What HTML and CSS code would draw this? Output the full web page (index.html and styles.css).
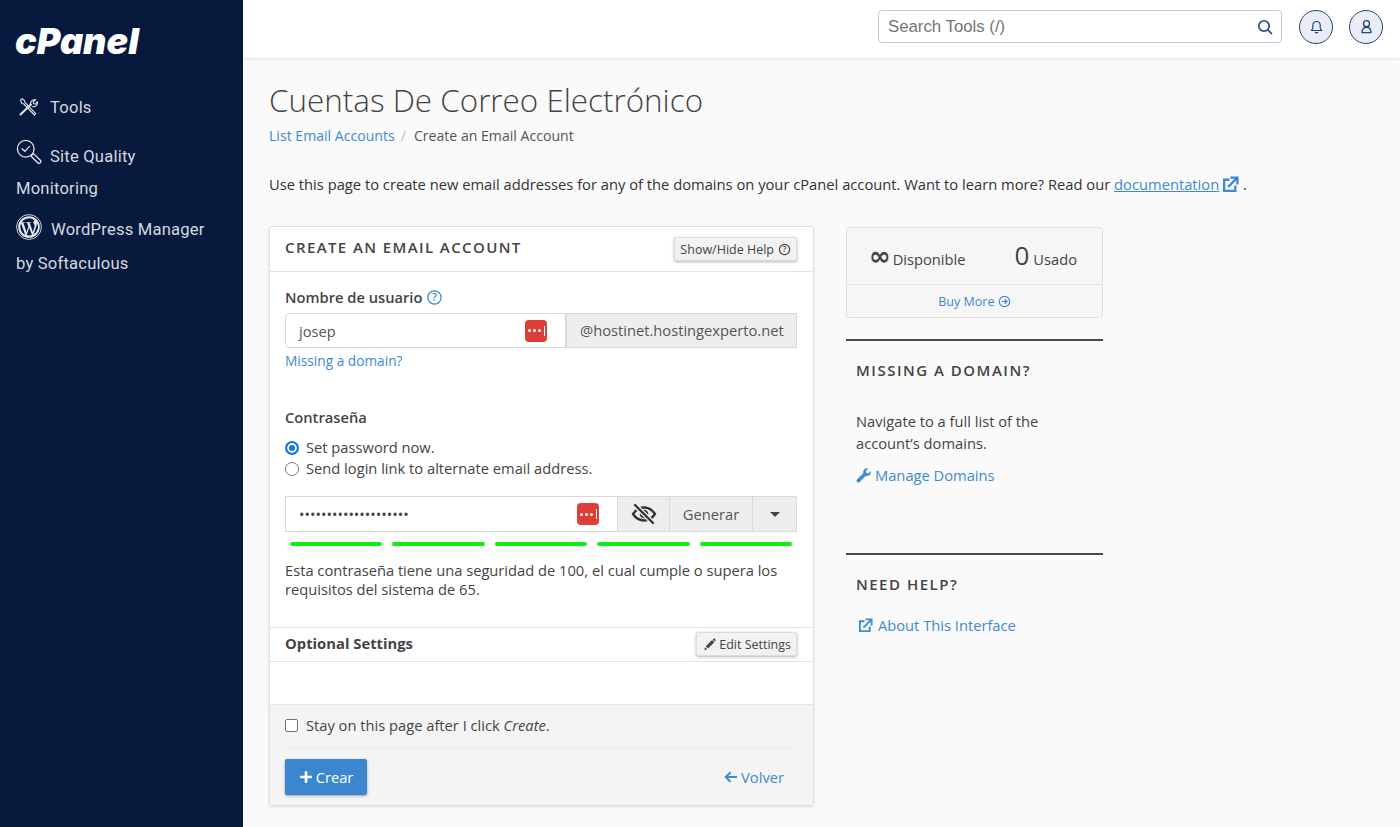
FILE: index.html
```html
<!DOCTYPE html>
<html lang="es">
<head>
<meta charset="utf-8">
<title>Cuentas De Correo Electrónico</title>
<link rel="stylesheet" href="styles.css">
</head>
<body>
<div class="app">
  <aside class="sidebar">
    <div class="logo">cPanel</div>
    <nav class="nav">
      <a class="nav-item nav-tools">
        <svg class="ic-tools" viewBox="0 0 24 24" fill="none" stroke="#e3e6ec" stroke-linecap="round" stroke-linejoin="round"><path d="M3 3.500 5 2l3 2.500.3 2 13 13.500-1.600 1.600-13-13.500-2.200-.4z" stroke-width="1.300"/><path d="M15.500 9 3 21" stroke-width="2.400"/><path d="M15 9.500c-1-3.300 2-7 6.200-6.500l-3 3 .4 2 2 .5 3-3c.4 4-3 7-6.300 6" stroke-width="1.300"/></svg>
        <span>Tools</span>
      </a>
      <a class="nav-item nav-sq">
        <svg class="ic-sq" viewBox="0 0 28 28" fill="none" stroke="#e3e6ec" stroke-width="1.400" stroke-linecap="round" stroke-linejoin="round"><circle cx="10.500" cy="10.500" r="9"/><path d="M6.500 10.500l3 2.800 5-5.300"/><path d="M17.200 17l2-1 7 6.800c.8 1 .7 2-.1 2.800-.9.8-1.900.7-2.700-.1l-6.900-6.700z"/></svg>
        <span>Site Quality<br>Monitoring</span>
      </a>
      <a class="nav-item nav-wp">
        <svg class="ic-wp" viewBox="0 0 26 26"><circle cx="13" cy="13" r="12.400" fill="none" stroke="#e3e6ec" stroke-width=".9"/><circle cx="13" cy="13" r="10.800" fill="#e3e6ec"/><path d="M4.300 13c0 3.500 2 6.500 5 7.900L5.100 9.500A8.700 8.700 0 0 0 4.300 13zm14.500-.4c0-1.100-.4-1.800-.7-2.400-.4-.7-.8-1.300-.8-2 0-.8.600-1.500 1.400-1.500h.1a8.700 8.700 0 0 0-13.200 1.600h.6c.9 0 2.300-.1 2.300-.1.500 0 .5.700 0 .7l-1 .1 3 9.100 1.900-5.600-1.300-3.500-.9-.1c-.5 0-.4-.8 0-.7 0 0 1.400.1 2.300.1s2.300-.1 2.300-.1c.5 0 .5.700 0 .7l-1 .1 3 9 .9-2.800c.4-1.100.6-1.900.6-2.600zm-5.600 1.200-2.500 7.200a8.700 8.700 0 0 0 5.300-.1l-.1-.1zm7.600-5c0 .3.100.6.100.9 0 .9-.2 1.900-.7 3.100l-2.700 7.700a8.700 8.700 0 0 0 3.300-11.700z" fill="#071a3e"/></svg>
        <span>WordPress Manager<br>by Softaculous</span>
      </a>
    </nav>
  </aside>
  <div class="page">
    <header class="topbar">
      <div class="search">
        <span class="search-text">Search Tools (/)</span>
        <svg class="search-ic" viewBox="0 0 16 16" fill="none" stroke="#20427a" stroke-width="1.600" stroke-linecap="round"><circle cx="7" cy="7" r="5.200"/><path d="M11 11l3.500 3.500"/></svg>
      </div>
      <div class="round-btn"><svg viewBox="0 0 16 16" fill="none" stroke="#20427a" stroke-width="1.200" stroke-linecap="round" stroke-linejoin="round"><path d="M2.500 12.300h11c-1-.9-1.600-1.700-1.600-3.500V6.500a3.900 3.900 0 0 0-7.800 0v2.300c0 1.800-.6 2.600-1.600 3.500z"/><path d="M6.700 14.500h2.600"/></svg></div>
      <div class="round-btn"><svg viewBox="0 0 16 16" fill="none" stroke="#20427a" stroke-width="1.400" stroke-linecap="round" stroke-linejoin="round"><circle cx="8" cy="5" r="3.200"/><path d="M3.200 14.500c0-3.500 1.800-5.500 4.800-5.500s4.800 2 4.800 5.500z"/></svg></div>
    </header>
    <main class="content">
      <h1 class="title">Cuentas De Correo Electrónico</h1>
      <div class="crumbs"><a class="link">List Email Accounts</a><span class="sep">/</span><span>Create an Email Account</span></div>
      <p class="intro">Use this page to create new email addresses for any of the domains on your cPanel account. Want to learn more? Read our <a class="link under">documentation</a><svg class="ic-ext" viewBox="0 0 16 16" fill="none" stroke="#3d8bd0" stroke-width="2.200"><path d="M7 3.500H2v10.500h10.500V9"/><path d="M6.500 9.500 14 2M9 1.500h5.500V7" stroke-linecap="square"/></svg> .</p>
      <div class="cols">
        <section class="card">
          <div class="card-head">
            <h2 class="card-title">CREATE AN EMAIL ACCOUNT</h2>
            <button class="mini-btn">Show/Hide Help <svg class="ic-q" viewBox="0 0 14 14"><circle cx="7" cy="7" r="5.500" fill="none" stroke="#444" stroke-width="1.300"/><text x="7" y="10" text-anchor="middle" class="q-t">?</text></svg></button>
          </div>
          <div class="card-body">
            <label class="lbl">Nombre de usuario <svg class="ic-help" viewBox="0 0 14 14"><circle cx="7" cy="7" r="6.200" fill="none" stroke="#3d8bd0" stroke-width="1.200"/><text x="7" y="10.300" text-anchor="middle" class="q-b">?</text></svg></label>
            <div class="input-group">
              <div class="field field-user"><span>josep</span><span class="lp"><i></i><i></i><i></i><b></b></span></div>
              <div class="addon">@hostinet.hostingexperto.net</div>
            </div>
            <a class="link missing">Missing a domain?</a>
            <div class="lbl lbl-pass">Contraseña</div>
            <div class="radio-row"><span class="radio on"></span>Set password now.</div>
            <div class="radio-row"><span class="radio"></span>Send login link to alternate email address.</div>
            <div class="input-group pass-group">
              <div class="field field-pass"><span class="dots">••••••••••••••••••••</span><span class="lp"><i></i><i></i><i></i><b></b></span></div>
              <div class="gbtn gbtn-eye"><svg viewBox="0 0 26 22"><path d="M2 11c3-4.500 7-6.500 11-6.500S21 6.500 24 11c-3 4.500-7 6.500-11 6.500S5 15.500 2 11z" fill="none" stroke="#333" stroke-width="2.300"/><circle cx="13" cy="11" r="4.300" fill="#333"/><path d="M4 2l18 18" stroke="#eee" stroke-width="5"/><path d="M4 2l18 18" stroke="#333" stroke-width="2.300" stroke-linecap="round"/></svg></div>
              <div class="gbtn gbtn-gen">Generar</div>
              <div class="gbtn gbtn-caret"><span class="caret"></span></div>
            </div>
            <div class="meter"><i></i><i></i><i></i><i></i><i></i></div>
            <p class="strength">Esta contraseña tiene una seguridad de 100, el cual cumple o supera los requisitos del sistema de 65.</p>
          </div>
          <div class="opt-head">
            <h3 class="opt-title">Optional Settings</h3>
            <button class="mini-btn mini-edit"><svg class="ic-pen" viewBox="0 0 14 14" fill="#444"><path d="M3 9 9.800 2.200l2.400 2.400L5.400 11.400zM2.300 10l2.100 2.100-3.100 1zM10.500 1.500l.8-.8c.4-.3.900-.3 1.200 0l1 1c.3.300.3.800 0 1.200l-.8.800z"/></svg>Edit Settings</button>
          </div>
          <div class="opt-space"></div>
          <div class="card-foot">
            <div class="stay"><span class="check"></span>Stay on this page after I click&nbsp;<em>Create</em>.</div>
            <div class="actions">
              <button class="primary"><svg viewBox="0 0 12 12" class="ic-plus"><path d="M6 1v10M1 6h10" stroke="#fff" stroke-width="2.200"/></svg>Crear</button>
              <a class="link back"><svg viewBox="0 0 14 12" class="ic-back" fill="none" stroke="#3d8bd0" stroke-width="2"><path d="M13 6H2M6.500 1.200 1.700 6l4.800 4.800"/></svg>Volver</a>
            </div>
          </div>
        </section>
        <aside class="side">
          <div class="stats">
            <div class="stats-top">
              <div class="stat"><span class="inf">∞</span><span>Disponible</span></div>
              <div class="stat"><span class="zero">0</span><span>Usado</span></div>
            </div>
            <div class="stats-foot"><a class="link">Buy More <svg class="ic-more" viewBox="0 0 14 14" fill="none" stroke="#3d8bd0" stroke-width="1.300"><circle cx="7" cy="7" r="5.600"/><path d="M3.800 7h5.500M7.200 4.600 9.600 7l-2.400 2.400"/></svg></a></div>
          </div>
          <div class="panel panel-domain">
            <h2 class="panel-title">MISSING A DOMAIN?</h2>
            <p class="panel-text">Navigate to a full list of the account’s domains.</p>
            <a class="link panel-link"><svg class="ic-wrench" viewBox="0 0 16 16" fill="#3d8bd0"><path d="M15.700 3.600c.2.800.1 1.700-.3 2.500a4.300 4.300 0 0 1-5 2.100L4 14.800a1.900 1.900 0 0 1-2.800 0 2 2 0 0 1 0-2.800l6.600-6.400a4.300 4.300 0 0 1 4.700-5.300l.6.200-2.700 2.600.5 2.200 2.200.5 2.600-2.600z"/></svg>Manage Domains</a>
          </div>
          <div class="panel panel-help">
            <h2 class="panel-title">NEED HELP?</h2>
            <a class="link panel-link about"><svg class="ic-ext2" viewBox="0 0 16 16" fill="none" stroke="#3d8bd0" stroke-width="2"><path d="M7 3.500H2v10.500h10.500V9"/><path d="M6.500 9.500 14 2M9 1.500h5.500V7" stroke-linecap="square"/></svg>About This Interface</a>
          </div>
        </aside>
      </div>
    </main>
  </div>
</div>
</body>
</html>
```
FILE: styles.css
```css
* { box-sizing: border-box; }
html, body { margin: 0; height: 100%; }
body { font-family: "Open Sans", sans-serif; font-size: 14.7px; color: #444; background: #fafafa; overflow: hidden; }
.app { display: flex; height: 827px; }
a { text-decoration: none; }
h1, h2, h3, p { margin: 0; }
svg { display: inline-block; }

.sidebar { width: 243px; flex: none; background: #071a3e; color: #d5d8de; font-family: Roboto, sans-serif; font-size: 16.6px; padding: 0 16px; }
.logo { font-family: Inter, sans-serif; font-weight: 900; font-style: italic; font-size: 36px; color: #fff; line-height: 40px; padding-top: 21px; height: 61px; margin-left: -1px; }
.nav { display: flex; flex-direction: column; margin-top: 30px; }
.nav-item { display: block; color: #d5d8de; letter-spacing: .2px; }
.nav-tools { display: flex; align-items: center; height: 32px; }
.ic-tools { width: 20px; height: 20px; margin: 0 12px 0 2px; }
.nav-sq { margin-top: 18px; line-height: 32px; }
.ic-sq { width: 26px; height: 26px; margin-right: 8px; float: left; margin-top: -2px; }
.nav-wp { margin-top: 8px; line-height: 34px; }
.ic-wp { width: 26px; height: 26px; float: left; margin-right: 9px; margin-top: 1px; }

.page { flex: 1; min-width: 0; display: flex; flex-direction: column; }
.topbar { height: 58px; background: #fff; box-shadow: 0 1px 3px rgba(0,0,0,.1); display: flex; align-items: center; justify-content: flex-end; padding: 0 17px 5px 0; gap: 16px; flex: none; }
.search { width: 404px; height: 33px; border: 1px solid #bfc9df; border-radius: 4px; display: flex; align-items: center; justify-content: space-between; padding: 0 8px 0 9px; margin-right: 1px; font-family: "Liberation Sans", sans-serif; font-size: 16.8px; color: #757575; background: #fff; }
.search-ic { width: 16px; height: 16px; }
.round-btn { width: 34px; height: 34px; border-radius: 50%; border: 1px solid #2c4670; background: #e9edf8; display: flex; align-items: center; justify-content: center; }
.round-btn svg { width: 15px; height: 15px; }

.content { padding: 0 0 0 26px; flex: 1; }
.title { font-weight: 300; font-size: 31.4px; line-height: 44px; margin-top: 20px; color: #444; }
.crumbs { font-size: 14.1px; line-height: 20px; margin-top: 4px; color: #555; }
.sep { margin: 0 8px 0 6px; color: #bbb; }
.link { color: #3d8bd0; }
.under { text-decoration: underline; }
.intro { font-size: 14.73px; line-height: 20px; margin-top: 28px; color: #333; white-space: nowrap; }
.ic-ext { width: 17px; height: 17px; vertical-align: -3px; margin-left: 3px; }

.cols { display: flex; gap: 32px; margin-top: 32px; align-items: flex-start; }
.card { width: 545px; height: 580px; background: #fff; border: 1px solid #e0e0e0; border-radius: 3px; box-shadow: 0 1px 3px rgba(0,0,0,.12); display: flex; flex-direction: column; }
.card-head { height: 45px; flex: none; border-bottom: 1px solid #e3e3e3; display: flex; align-items: center; justify-content: space-between; padding: 0 16px 0 15px; }
.card-title { font-size: 15px; font-weight: 600; letter-spacing: 1.400px; color: #444; margin-top: -4px; }
.mini-btn { font-family: inherit; font-size: 12.5px; color: #444; background: #f2f2f2; border: 1px solid #dcdcdc; border-radius: 2px; box-shadow: 0 1px 3px rgba(0,0,0,.3); height: 24px; padding: 0 5px; display: inline-flex; align-items: center; gap: 4px; }
.ic-q { width: 13px; height: 13px; }
.q-t { font-family: "Open Sans", sans-serif; font-size: 9px; font-weight: 600; fill: #444; }
.q-b { font-family: "Open Sans", sans-serif; font-size: 10px; font-weight: 600; fill: #3d8bd0; }

.card-body { padding: 15px 16px 0 15px; height: 355px; flex: none; }
.lbl { display: block; font-weight: 600; line-height: 20px; color: #444; }
.ic-help { width: 15px; height: 15px; vertical-align: -2px; margin-left: 1px; }
.input-group { display: flex; height: 35px; margin-top: 6px; }
.field { background: #fff; border: 1px solid #d9d9d9; display: flex; align-items: center; justify-content: space-between; padding: 0 18px 0 13px; color: #555; }
.field-user { width: 281px; border-radius: 4px 0 0 4px; }
.addon { flex: 1; background: #eee; border: 1px solid #d9d9d9; padding-left: 13px; line-height: 33px; color: #555; white-space: nowrap; }
.lp { width: 22px; height: 22px; background: #dd3e3a; border-radius: 4px; display: flex; align-items: center; justify-content: center; gap: 2px; padding-left: 1px; flex: none; }
.lp i { width: 3px; height: 3px; border-radius: 50%; background: #fff; }
.lp b { width: 1px; height: 10px; background: #fff; margin-left: 1px; }
.missing { display: block; font-size: 13.7px; line-height: 20px; margin-top: 3px; }
.lbl-pass { margin-top: 36px; }
.radio-row { display: flex; align-items: center; line-height: 21px; color: #444; }
.lbl-pass + .radio-row { margin-top: 10px; }
.radio { width: 14px; height: 14px; border-radius: 50%; border: 1px solid #767676; background: #fff; margin-right: 7px; flex: none; }
.radio.on { border: 2px solid #1a73e8; box-shadow: inset 0 0 0 2px #fff; background: #1a73e8; }
.pass-group { margin-top: 17px; height: 36px; }
.field-pass { width: 333px; }
.dots { font-size: 14.6px; color: #444; }
.gbtn { background: #eee; border: 1px solid #d9d9d9; border-left: 0; display: flex; align-items: center; justify-content: center; color: #555; }
.gbtn-eye { width: 52px; }
.gbtn-eye svg { width: 26px; height: 22px; }
.gbtn-gen { width: 83px; }
.gbtn-caret { flex: 1; border-radius: 0 2px 2px 0; }
.caret { border: 5px solid transparent; border-top-color: #444; border-bottom: 0; }
.meter { display: flex; gap: 10px; margin: 10px 5px 0; }
.meter i { flex: 1; height: 4px; background: #0cef0c; border-radius: 2px; }
.strength { line-height: 19px; margin-top: 15px; color: #444; }

.opt-head { height: 35px; flex: none; border-top: 1px solid #e3e3e3; border-bottom: 1px solid #e3e3e3; display: flex; align-items: center; justify-content: space-between; padding: 0 16px 0 15px; }
.opt-title { font-size: 14.8px; font-weight: 700; color: #444; margin-top: -3px; }
.mini-edit { height: 24px; gap: 3px; margin-top: -1px; padding-left: 6px; }
.ic-pen { width: 13px; height: 13px; }
.opt-space { height: 42px; flex: none; }
.card-foot { flex: 1; background: #f4f4f4; border-top: 1px solid #e6e6e6; padding: 0 16px 0 15px; border-radius: 0 0 3px 3px; }
.stay { display: flex; align-items: center; height: 44px; padding-bottom: 3px; color: #444; border-bottom: 1px solid #ebebeb; }
.check { width: 13px; height: 13px; border: 1px solid #767676; border-radius: 2px; background: #fff; margin-right: 8px; flex: none; }
.actions { display: flex; align-items: center; justify-content: space-between; margin-top: 10px; padding-right: 13px; }
.primary { width: 82px; height: 36px; background: #3a87cf; border: 0; border-radius: 2px; color: #fff; font-family: inherit; font-size: 14.7px; display: flex; align-items: center; justify-content: center; gap: 3px; box-shadow: 0 1px 3px rgba(0,0,0,.35); }
.ic-plus { width: 14px; height: 14px; }
.back { display: flex; align-items: center; gap: 3px; }
.ic-back { width: 14px; height: 12px; }

.side { width: 257px; flex: none; margin-top: 1px; }
.stats { border: 1px solid #e0e0e0; border-radius: 3px; background: #f6f6f6; height: 91px; }
.stats-top { height: 57px; display: flex; border-bottom: 1px solid #e3e3e3; align-items: baseline; justify-content: space-between; padding: 14px 25px 0 22px; color: #444; }
.stat { display: inline-flex; align-items: baseline; gap: 2px; }
.stat + .stat { gap: 4px; }
.inf { font-size: 26px; line-height: 26px; font-weight: 700; font-family: "DejaVu Sans", sans-serif; }
.zero { font-size: 26px; line-height: 26px; font-weight: 400; }
.stats-foot { text-align: center; font-size: 12.5px; line-height: 33px; }
.ic-more { width: 13px; height: 13px; vertical-align: -2px; }
.panel { border-top: 2px solid #4a4a4a; padding: 0 10px; }
.panel-domain { margin-top: 21px; height: 214px; }
.panel-title { font-size: 15px; font-weight: 600; letter-spacing: 1.500px; line-height: 20px; margin-top: 19px; color: #444; }
.panel-text { line-height: 22px; margin-top: 30px; color: #444; }
.panel-link { display: flex; align-items: center; line-height: 20px; margin-top: 11px; }
.ic-wrench { width: 15px; height: 15px; margin-right: 4px; }
.about { margin-top: 21px; padding-left: 2px; }
.ic-ext2 { width: 15px; height: 15px; margin-right: 5px; }
```
